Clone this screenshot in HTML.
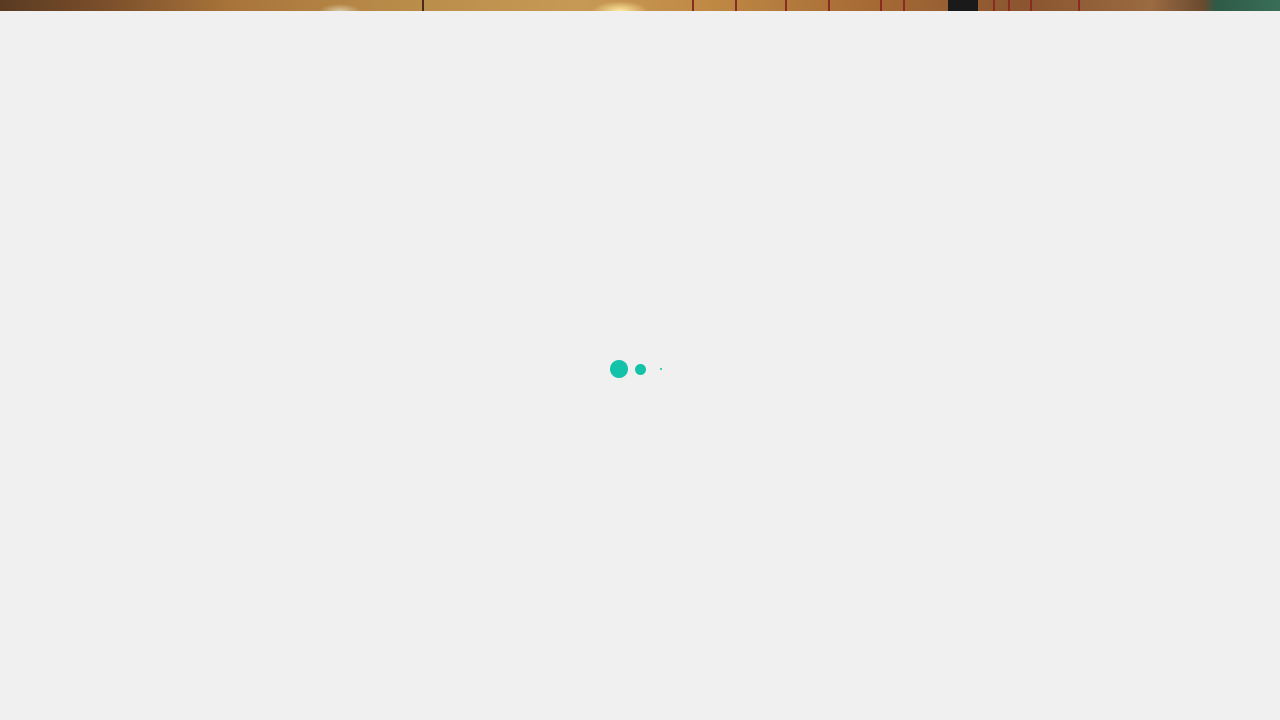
<!DOCTYPE html>
<html><head><meta charset="utf-8"><style>
html,body{margin:0;padding:0;width:1280px;height:720px;background:#f0f0f0;overflow:hidden}
.top{position:absolute;left:0;top:0;width:1280px;height:11px;
background:
radial-gradient(ellipse 40px 14px at 620px 11px,#ffe9a0,rgba(255,220,120,0) 70%),
radial-gradient(ellipse 30px 10px at 340px 11px,#d8c8a0,rgba(200,180,140,0) 70%),
linear-gradient(90deg,#5a3a22 0%,#7a4e2a 8%,#a8743a 18%,#b88a48 30%,#c69a55 45%,#c08a45 55%,#a66a35 68%,#8a5530 80%,#9a6a40 90%,#6a4a30 94%,#2e5a48 95%,#3a6e58 100%)}
.l{position:absolute;top:0;width:2px;height:11px;background:#8a2a20}
.d{position:absolute;border-radius:50%;background:#13c2a8}
</style></head><body>
<div class="top"></div>
<div class="l" style="left:422px;background:#4a2a1a"></div>
<div class="l" style="left:692px"></div><div class="l" style="left:735px"></div>
<div class="l" style="left:785px"></div><div class="l" style="left:828px"></div>
<div class="l" style="left:880px"></div><div class="l" style="left:903px"></div>
<div class="l" style="left:948px;width:30px;background:#1a1a1a"></div>
<div class="l" style="left:993px"></div><div class="l" style="left:1008px"></div>
<div class="l" style="left:1030px"></div><div class="l" style="left:1078px"></div>
<div class="d" style="left:610px;top:360px;width:18px;height:18px"></div>
<div class="d" style="left:634.5px;top:363.5px;width:11px;height:11px"></div>
<div class="d" style="left:660px;top:368px;width:2px;height:2px"></div>
</body></html>
